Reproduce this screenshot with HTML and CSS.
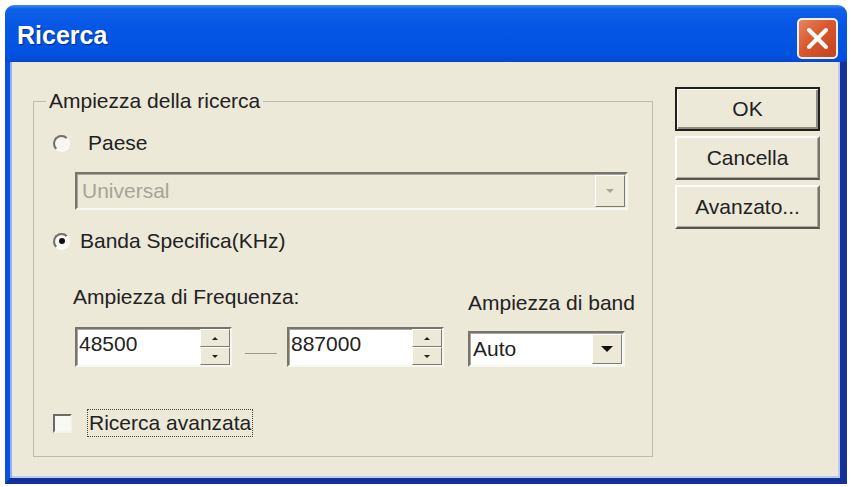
FILE: index.html
```html
<!DOCTYPE html>
<html lang="it">
<head>
  <meta charset="UTF-8">
  <title>Ricerca</title>
  <link rel="stylesheet" href="styles.css">
</head>
<body>
  <div class="window">
    <div class="titlebar">
      <span class="title">Ricerca</span>
      <button class="close" aria-label="Chiudi">
        <svg width="23" height="23" viewBox="0 0 23 23">
          <path d="M3 3 L20 20 M20 3 L3 20" stroke="#fff" stroke-width="4" stroke-linecap="round"/>
        </svg>
      </button>
    </div>
    <div class="content">
      <fieldset class="group">
        <legend>Ampiezza della ricerca</legend>

        <label class="option paese">
          <span class="radio"></span>
          <span>Paese</span>
        </label>
        <div class="combo disabled">
          <span class="combo-text">Universal</span>
          <span class="drop"><i class="arrow"></i></span>
        </div>

        <label class="option banda">
          <span class="radio checked"></span>
          <span>Banda Specifica(KHz)</span>
        </label>

        <div class="range">
          <div class="col">
            <div class="caption">Ampiezza di Frequenza:</div>
            <div class="spins">
              <div class="spin">
                <span class="value">48500</span>
                <span class="spin-btns"><span class="up"></span><span class="down"></span></span>
              </div>
              <span class="dash"></span>
              <div class="spin">
                <span class="value">887000</span>
                <span class="spin-btns"><span class="up"></span><span class="down"></span></span>
              </div>
            </div>
          </div>
          <div class="col">
            <div class="caption band">Ampiezza di band</div>
            <div class="combo auto">
              <span class="combo-text">Auto</span>
              <span class="drop"><i class="arrow"></i></span>
            </div>
          </div>
        </div>

        <label class="option check">
          <span class="checkbox"></span>
          <span class="focus">Ricerca avanzata</span>
        </label>
      </fieldset>

      <div class="buttons">
        <button class="btn default">OK</button>
        <button class="btn">Cancella</button>
        <button class="btn">Avanzato...</button>
      </div>
    </div>
  </div>
</body>
</html>
```

FILE: styles.css
```css
html {
  background: #fff;
}
body {
  margin: 0;
  font-family: "Liberation Sans", Arial, sans-serif;
  font-size: 21px;
  color: #222;
}
.window {
  margin: 5px 0 0 5px;
  width: 842px;
  height: 479px;
  display: flex;
  flex-direction: column;
}
.titlebar {
  height: 57px;
  box-sizing: border-box;
  display: flex;
  align-items: center;
  justify-content: space-between;
  padding: 4px 9px 0 12px;
  border-radius: 9px 9px 0 0;
  background: linear-gradient(to bottom, #3f8cf3 0, #0f5fe8 4px, #0556e4 40%, #0053e0 85%, #0748d4 100%);
}
.title {
  color: #fff;
  font-weight: bold;
  font-size: 25px;
  text-shadow: 1px 1px 1px #0a2f8a;
}
.close {
  width: 41px;
  height: 41px;
  margin-top: 6px;
  padding: 0;
  display: flex;
  align-items: center;
  justify-content: center;
  border: 2px solid #eef0f6;
  border-radius: 5px;
  background: linear-gradient(135deg, #e9835e 0, #d9582f 45%, #c4421d 100%);
}
.content {
  flex: 1;
  display: flex;
  align-items: flex-start;
  gap: 22px;
  padding: 25px 0 0 23px;
  background: #ece9d8;
  border-style: solid;
  border-width: 0 7px 6px 5px;
  border-color: #0d52e0 #15309a #15309a #0b50e0;
  box-shadow: inset 2px 0 0 #8fb1f5, inset -2px -2px 0 #b9cbf3;
}

/* group box */
.group {
  box-sizing: border-box;
  width: 620px;
  margin: 2px 0 0;
  padding: 0 0 21px 19px;
  border: 1px solid #bebcae;
}
.group legend {
  padding: 0 3px;
  margin-left: -7px;
  line-height: 24px;
}
.option {
  display: flex;
  align-items: center;
  height: 24px;
}
.paese {
  margin-top: 18px;
  gap: 18px;
}
.banda {
  margin-top: 19px;
  gap: 10px;
}
.check {
  margin-top: 44px;
  gap: 15px;
}
.radio {
  width: 17px;
  height: 17px;
  box-sizing: border-box;
  border-radius: 50%;
  border: 2px solid;
  border-color: #706e66 #fbfbf8 #fbfbf8 #706e66;
  background: #f7f6f1;
  display: flex;
  align-items: center;
  justify-content: center;
}
.radio.checked::after {
  content: "";
  width: 6px;
  height: 6px;
  border-radius: 50%;
  background: #111;
}
.checkbox {
  width: 19px;
  height: 19px;
  box-sizing: border-box;
  border: 2px solid;
  border-color: #6c6a62 #f4f3ec #f4f3ec #6c6a62;
  background: #f8f8f4;
}
.focus {
  border: 1px dotted #444;
  padding: 2px 1px;
  line-height: 22px;
}

/* combo boxes */
.combo {
  display: flex;
  align-items: center;
  box-sizing: border-box;
  border: 2px solid;
  border-color: #76746b #f7f7f2 #f7f7f2 #76746b;
  box-shadow: inset 1px 1px 0 #a9a79c;
  background: #fff;
}
.combo.disabled {
  margin: 17px 0 0 22px;
  width: 553px;
  height: 38px;
  background: #ece9d8;
  color: #a6a498;
}
.combo-text {
  flex: 1;
  padding-left: 5px;
}
.drop {
  width: 30px;
  align-self: stretch;
  margin: 1px 1px 1px 0;
  box-sizing: border-box;
  border: 1px solid;
  border-color: #fff #7e7c72 #7e7c72 #fff;
  background: #ece9d8;
  display: flex;
  align-items: center;
  justify-content: center;
}
.arrow {
  width: 0;
  height: 0;
  border-left: 6px solid transparent;
  border-right: 6px solid transparent;
  border-top: 6px solid #111;
}
.disabled .arrow {
  border-left-width: 4px;
  border-right-width: 4px;
  border-top: 4px solid #a8a69b;
}
.auto {
  width: 157px;
  height: 36px;
}
.auto .combo-text {
  padding-left: 3px;
}

/* frequency range */
.range {
  display: flex;
  align-items: flex-end;
  gap: 24px;
  margin: 32px 0 0 20px;
}
.caption {
  line-height: 24px;
  margin-bottom: 18px;
}
.caption.band {
  margin-bottom: 16px;
}
.spins {
  display: flex;
  align-items: center;
  margin-left: 2px;
}
.spin {
  width: 157px;
  height: 40px;
  box-sizing: border-box;
  display: flex;
  border: 2px solid;
  border-color: #76746b #f7f7f2 #f7f7f2 #76746b;
  box-shadow: inset 1px 1px 0 #a9a79c;
  background: #fff;
}
.spin .value {
  flex: 1;
  padding: 3px 0 0 2px;
  line-height: 24px;
}
.spin-btns {
  width: 30px;
  display: flex;
  flex-direction: column;
}
.spin-btns span {
  flex: 1;
  box-sizing: border-box;
  border: 1px solid;
  border-color: #fff #7e7c72 #7e7c72 #fff;
  background: #ece9d8;
  display: flex;
  align-items: center;
  justify-content: center;
}
.spin-btns .up::after,
.spin-btns .down::after {
  content: "";
  border-left: 3px solid transparent;
  border-right: 3px solid transparent;
}
.spin-btns .up::after {
  border-bottom: 3px solid #222;
}
.spin-btns .down::after {
  border-top: 3px solid #222;
}
.dash {
  width: 32px;
  height: 1px;
  margin: 12px 10px 0 13px;
  background: #9c9a90;
}

/* buttons */
.buttons {
  display: flex;
  flex-direction: column;
  gap: 5px;
}
.btn {
  width: 145px;
  height: 44px;
  font: inherit;
  color: #222;
  background: #ece9d8;
  border: 2px solid;
  border-color: #fdfdfb #77756c #55544d #fdfdfb;
  box-shadow: inset -1px -1px 0 #aeac9f;
  padding: 0;
}
.btn.default {
  border: 2px solid #1f1f1d;
  box-shadow: inset 1px 1px 0 #fff, inset -2px -2px 0 #8d8b80;
}
```
